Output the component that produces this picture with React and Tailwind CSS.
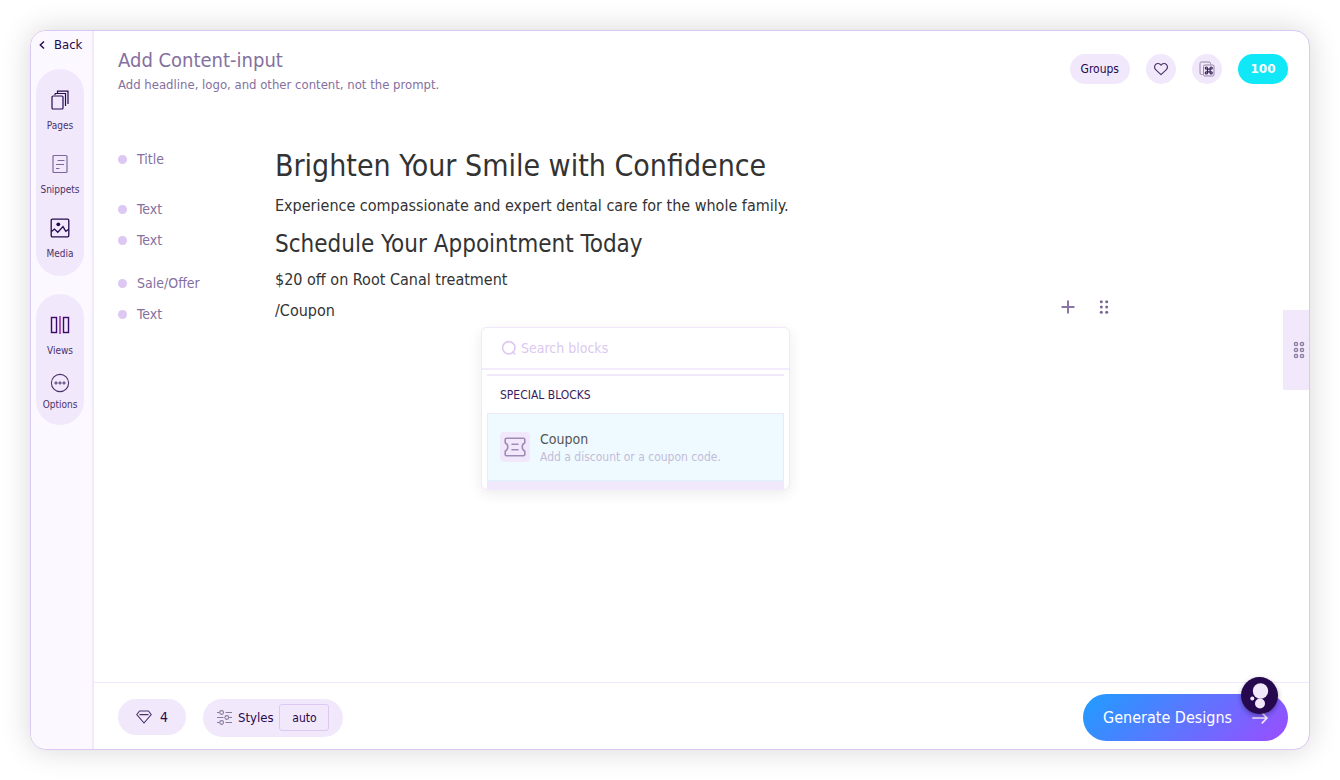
import React from "react";

const PagesIcon = () => (
  <svg width="18" height="20" viewBox="0 0 18 20" fill="none" stroke="#26084f" strokeWidth="1.2" aria-hidden="true">
    <rect x="1" y="6" width="11" height="13" rx="1" />
    <path d="M4 3.5h10.5V16" />
    <path d="M4 5V3.500M6.500 3V1.200H17V14" />
  </svg>
);

const SnippetsIcon = () => (
  <svg width="16" height="20" viewBox="0 0 16 20" fill="none" stroke="#7d6699" strokeWidth="1.2" aria-hidden="true">
    <rect x="1" y="1.5" width="14" height="17" rx="1" />
    <path d="M5.500 6.500h7M4 10.500h8M4 14.500h3.500" />
  </svg>
);

const MediaIcon = () => (
  <svg width="20" height="20" viewBox="0 0 20 20" fill="none" stroke="#26084f" strokeWidth="1.3" aria-hidden="true">
    <rect x="1.2" y="1.2" width="17.6" height="17.6" rx="1.2" />
    <circle cx="8.3" cy="6.3" r="1.9" fill="#26084f" stroke="none" />
    <path d="M1.5 13.500l3-2.500 3.3 3.200 5.200-5.600 2.800 4.700 3-2" />
  </svg>
);

const ViewsIcon = () => (
  <svg width="20" height="20" viewBox="0 0 20 20" fill="none" strokeWidth="1.4" aria-hidden="true">
    <rect x="1.5" y="2.5" width="5" height="15" stroke="#3a0a68" />
    <path d="M10 1v18" stroke="#8a1a9a" />
    <rect x="13.5" y="2.5" width="5" height="15" stroke="#3a0a68" />
  </svg>
);

const OptionsIcon = () => (
  <svg width="20" height="20" viewBox="0 0 20 20" fill="none" stroke="#4b3269" aria-hidden="true">
    <circle cx="10" cy="10" r="8.6" strokeWidth="1.1" />
    <g fill="#d9cbe8" strokeWidth="1">
      <circle cx="6" cy="10" r="1.1" />
      <circle cx="10" cy="10" r="1.1" />
      <circle cx="14" cy="10" r="1.1" />
    </g>
  </svg>
);

const HeartIcon = () => (
  <svg width="14" height="14" viewBox="0 0 14 14" fill="none" stroke="#4b3269" strokeWidth="1.1" strokeLinejoin="round" aria-hidden="true">
    <path d="M7 12.700L1.900 7.800C.5 6.400.4 4.100 1.500 2.700 2.900 1 5.600 1.100 7 3.300 8.400 1.100 11.100 1 12.500 2.700 13.600 4.100 13.500 6.400 12.100 7.800z" />
  </svg>
);

const CommandIcon = () => (
  <svg width="16" height="16" viewBox="0 0 16 16" fill="none" stroke="#8a7c9c" strokeWidth="0.9" aria-hidden="true">
    <path d="M3.500 13.500H2.500A1.500 1.500 0 0 1 1 12V2.500A1.500 1.500 0 0 1 2.500 1H10a1.500 1.500 0 0 1 1.500 1.500v1" />
    <rect x="4.500" y="4" width="10.500" height="11" rx="1.300" />
    <path stroke="#3a2557" strokeWidth="1.2" d="M8.500 8.200h2.600v2.600H8.500zM8.500 8.200H7.300a1.100 1.100 0 1 1 1.200-1.100zM11.100 8.200V7.100a1.100 1.100 0 1 1 1.200 1.100zM8.500 10.800v1.100a1.100 1.100 0 1 1-1.200-1.100zM11.100 10.800h1.200a1.100 1.100 0 1 1-1.200 1.100z" />
  </svg>
);

const SearchIcon = () => (
  <svg width="16" height="16" viewBox="0 0 16 16" fill="none" stroke="#dcc8f2" strokeWidth="1.6" strokeLinecap="round" aria-hidden="true">
    <circle cx="7.800" cy="7.800" r="6.200" />
    <path d="M11.800 12l2 2" />
  </svg>
);

const CouponIcon = () => (
  <svg width="22" height="20" viewBox="0 0 22 20" fill="none" stroke="#9f8bb8" strokeWidth="1.600" strokeLinejoin="round" strokeLinecap="round" aria-hidden="true">
    <path d="M2.500 1.200h17a1.300 1.300 0 0 1 1.300 1.300v3.300c-1.500.8-2.600 2.400-2.600 4.200s1.100 3.400 2.600 4.200v3.300a1.300 1.300 0 0 1-1.300 1.300h-17a1.300 1.300 0 0 1-1.300-1.300v-3.300c1.500-.8 2.600-2.400 2.600-4.200S2.700 6.600 1.200 5.800V2.500a1.300 1.300 0 0 1 1.300-1.300z" />
    <path d="M8 7.300h6M8 12.700h6" />
  </svg>
);

const PlusIcon = () => (
  <svg width="14" height="14" viewBox="0 0 14 14" stroke="#8b74a8" strokeWidth="2" aria-hidden="true">
    <path d="M7 .5v13M.5 7h13" />
  </svg>
);

const DragIcon = () => (
  <svg width="10" height="14" viewBox="0 0 10 14" fill="#7d6699" aria-hidden="true">
    {[1.800, 7, 12.200].map((y) => (
      <g key={y}>
        <circle cx="2.300" cy={y} r="1.500" />
        <circle cx="7.700" cy={y} r="1.500" />
      </g>
    ))}
  </svg>
);

const HandleIcon = () => (
  <svg width="12" height="18" viewBox="0 0 12 18" fill="#ddd0ea" stroke="#8a7c9c" strokeWidth="1.200" aria-hidden="true">
    {[3, 9, 15].map((y) => (
      <g key={y}>
        <circle cx="3" cy={y} r="1.700" />
        <circle cx="9" cy={y} r="1.700" />
      </g>
    ))}
  </svg>
);

const DiamondIcon = () => (
  <svg width="16" height="14" viewBox="0 0 16 14" fill="none" stroke="#4b3269" strokeWidth="1.100" strokeLinejoin="round" aria-hidden="true">
    <path d="M3.500 1h9l2.700 3.600L8 13 .8 4.600zM3.500 4.600h9" />
  </svg>
);

const SlidersIcon = () => (
  <svg width="15" height="15" viewBox="0 0 15 15" fill="none" stroke="#8a7c9c" strokeWidth="1.100" aria-hidden="true">
    <path d="M0 2.500h2.300M8.500 2.500H15M0 7.500h6.500M12.200 7.500H15M0 12.500h2.300M8.500 12.500H15" />
    <circle cx="4.600" cy="2.500" r="1.900" />
    <circle cx="9.800" cy="7.500" r="1.900" />
    <circle cx="4.600" cy="12.500" r="1.900" />
  </svg>
);

const ArrowIcon = () => (
  <svg width="16" height="12" viewBox="0 0 16 12" fill="none" stroke="#f1e8fc" strokeWidth="1.700" strokeLinecap="round" strokeLinejoin="round" aria-hidden="true">
    <path d="M1 6h14M10.300 1.200L15 6l-4.700 4.800" />
  </svg>
);

function NavItem({ icon, label, className = "gap-2" }) {
  return (
    <button type="button" className={`flex w-full flex-col items-center text-[10px] leading-4 text-[#4b3269] ${className}`}>
      {icon}
      {label}
    </button>
  );
}

function Block({ label, labelClass = "", className = "", children }) {
  return (
    <div className={`flex items-start ${className}`}>
      <div className={`flex w-[157px] shrink-0 items-center gap-[10px] text-sm leading-5 text-[#8470a0] ${labelClass}`}>
        <span className="h-[9px] w-[9px] rounded-full bg-[#dcc8f2]" />
        {label}
      </div>
      {children}
    </div>
  );
}

function BlockMenu() {
  return (
    <div className="absolute top-[26px] left-[206px] z-10 w-[309px] overflow-hidden rounded-md border border-[#f1e8fc] bg-white shadow-[0_4px_14px_rgba(0,0,0,0.08)]">
      <label className="flex h-[42px] items-center gap-1 border-b-2 border-[#f4ecfd] pl-[19px]">
        <SearchIcon />
        <input
          type="text"
          aria-label="Search blocks"
          placeholder="Search blocks"
          className="min-w-0 flex-1 bg-transparent text-sm text-[#26084f] outline-none placeholder:text-[#dcc8f2]"
        />
      </label>
      <div className="mx-[5px] mt-1 border-t-2 border-[#f1e8fc]">
        <h3 className="pt-px pl-[13px] text-xs leading-[36px] text-[#3a1a60]">SPECIAL BLOCKS</h3>
        <button type="button" className="flex h-[68px] w-full items-center gap-[10px] border border-[#d8f3fc] border-t-[#f1e8fc] bg-[#eefaff] pl-3 text-left">
          <span className="flex h-[30px] w-[30px] items-center justify-center rounded bg-[#f1e8fc]">
            <CouponIcon />
          </span>
          <span className="flex flex-col">
            <span className="text-sm leading-5 text-[#555555]">Coupon</span>
            <span className="text-xs leading-4 text-[#c4bcd6]">Add a discount or a coupon code.</span>
          </span>
        </button>
        <div className="h-2 bg-[#f1e8fc]" />
      </div>
    </div>
  );
}

export default function App() {
  return (
    <div className="flex min-h-screen bg-white p-[30px] font-['DejaVu_Sans_Condensed','DejaVu_Sans',sans-serif]">
      <div className="flex flex-1 overflow-hidden rounded-2xl border border-[#dcc8f2] bg-white shadow-[0_0_30px_rgba(0,0,0,0.16)]">
        <nav className="flex w-[63px] shrink-0 flex-col border-r-2 border-[#f1e8fc] bg-[#fbf8ff]">
          <a href="#back" className="flex h-[27px] items-center gap-[9px] pl-2 text-[13px] text-[#26084f]">
            <svg width="6" height="8" viewBox="0 0 6 8" fill="none" stroke="#26084f" strokeWidth="1.400" aria-hidden="true">
              <path d="M5 .5L1.300 4 5 7.500" />
            </svg>
            Back
          </a>
          <div className="mt-[11px] ml-[5px] flex w-12 flex-col gap-5 rounded-full bg-[#f1e8fc] pt-[21px] pb-[14px]">
            <NavItem icon={<PagesIcon />} label="Pages" />
            <NavItem icon={<SnippetsIcon />} label="Snippets" />
            <NavItem icon={<MediaIcon />} label="Media" />
          </div>
          <div className="mt-[18px] ml-[5px] flex w-12 flex-col gap-[14px] rounded-full bg-[#f1e8fc] pt-[21px] pb-3">
            <NavItem icon={<ViewsIcon />} label="Views" />
            <NavItem icon={<OptionsIcon />} label="Options" className="gap-1" />
          </div>
        </nav>

        <div className="relative flex min-w-0 flex-1 flex-col">
          <header className="flex items-start justify-between pt-4 pr-[21px] pl-6">
            <div>
              <h1 className="text-xl leading-[26px] text-[#8470a0]">Add Content-input</h1>
              <p className="text-[13px] leading-6 text-[#8470a0]">Add headline, logo, and other content, not the prompt.</p>
            </div>
            <div className="mt-[7px] flex items-center gap-4 text-xs text-[#26084f]">
              <button type="button" className="h-[30px] rounded-full bg-[#f1e8fc] px-[11px]">Groups</button>
              <button type="button" aria-label="Favorites" className="flex h-[30px] w-[30px] items-center justify-center rounded-full bg-[#f1e8fc]">
                <HeartIcon />
              </button>
              <button type="button" aria-label="Shortcuts" className="flex h-[30px] w-[30px] items-center justify-center rounded-full bg-[#f1e8fc]">
                <CommandIcon />
              </button>
              <button type="button" className="h-[30px] w-[50px] rounded-full bg-[#10e8f8] font-['DejaVu_Sans',sans-serif] font-bold text-white">100</button>
            </div>
          </header>

          <main className="flex-1 pt-[52px] pl-6">
            <Block label="Title">
              <h2 className="text-[30px] leading-[34px] text-[#333333]">Brighten Your Smile with Confidence</h2>
            </Block>
            <Block label="Text" className="mt-[13px]" labelClass="mt-[3px]">
              <p className="text-base leading-5 text-[#333333]">Experience compassionate and expert dental care for the whole family.</p>
            </Block>
            <Block label="Text" className="mt-[11px]">
              <h3 className="text-2xl leading-7 text-[#333333]">Schedule Your Appointment Today</h3>
            </Block>
            <Block label="Sale/Offer" className="mt-3" labelClass="mt-[3px]">
              <p className="text-base leading-5 text-[#333333]">$20 off on Root Canal treatment</p>
            </Block>
            <Block label="Text" className="mt-2 pr-[200px]" labelClass="mt-[3px]">
              <div className="relative min-w-0 flex-1">
                <input
                  type="text"
                  aria-label="Block text"
                  defaultValue="/Coupon"
                  className="block h-5 w-full bg-transparent text-base leading-5 text-[#333333] outline-none"
                />
                <BlockMenu />
              </div>
              <div className="flex h-3 items-center gap-6">
                <button type="button" aria-label="Add block"><PlusIcon /></button>
                <button type="button" aria-label="Move block"><DragIcon /></button>
              </div>
            </Block>
          </main>

          <button type="button" aria-label="Open side panel" className="absolute top-[279px] right-0 flex h-20 w-[26px] items-center justify-center bg-[#f1e8fc] pl-[5px]">
            <HandleIcon />
          </button>

          <footer className="flex items-center justify-between border-t border-[#f1e8fc] pt-[11px] pr-[21px] pb-2 pl-6 text-[#26084f]">
            <div className="flex items-start gap-[17px]">
              <button type="button" className="flex h-9 w-[68px] items-center justify-center gap-2 rounded-full bg-[#f1e8fc] text-sm">
                <DiamondIcon />
                4
              </button>
              <div className="flex h-[38px] items-center gap-[6px] rounded-full bg-[#f1e8fc] px-[14px] text-[13px]">
                <SlidersIcon />
                <span>Styles</span>
                <button type="button" className="h-[27px] w-[50px] rounded-[3px] border border-[#dcc8f2] text-xs">auto</button>
              </div>
            </div>
            <div className="relative">
              <button type="button" className="flex h-[47px] w-[205px] items-center justify-between rounded-full bg-linear-[135deg] from-[#1f9dff] to-[#9b4dff] px-5 text-base text-white">
                Generate Designs
                <ArrowIcon />
              </button>
              <button type="button" aria-label="Assistant" className="absolute -top-[17px] right-[10px] h-[37px] w-[37px] rounded-full bg-[#26084f] shadow-[0_2px_5px_rgba(0,0,0,0.35)]">
                <svg width="37" height="37" viewBox="0 0 37 37" fill="#f1e8fc" aria-hidden="true">
                  <circle cx="19.500" cy="14" r="7.700" />
                  <circle cx="19" cy="26.500" r="5" />
                  <circle cx="11.300" cy="21.500" r="2" />
                </svg>
              </button>
            </div>
          </footer>
        </div>
      </div>
    </div>
  );
}
